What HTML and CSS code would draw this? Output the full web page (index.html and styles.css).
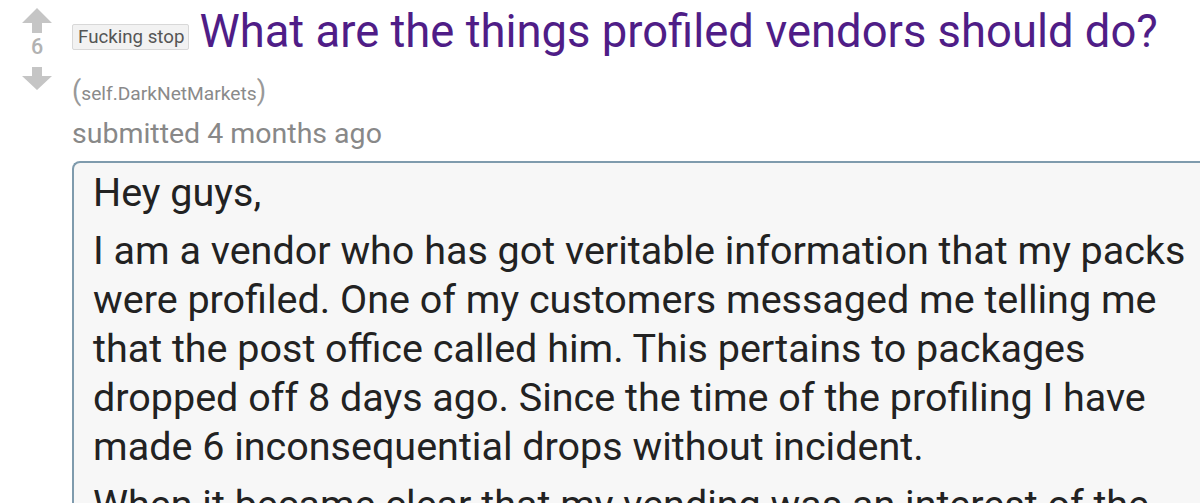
FILE: index.html
```html
<!DOCTYPE html>
<html>
<head>
<meta charset="utf-8">
<link rel="stylesheet" href="styles.css">
</head>
<body>
<div class="post">
  <div class="vote">
    <svg class="arrow up" width="30" height="25" viewBox="0 0 30 25"><path d="M15 0 L30 15 L20 15 L20 25 L10 25 L10 15 L0 15 Z" fill="#c5c5c5"/></svg>
    <div class="score">6</div>
    <svg class="arrow down" width="30" height="23" viewBox="0 0 30 23"><path d="M15 23 L30 9 L20 9 L20 0 L10 0 L10 9 L0 9 Z" fill="#c5c5c5"/></svg>
  </div>
  <div class="main">
    <div class="titlerow">
      <span class="flair">Fucking stop</span>
      <span class="title">What are the things profiled vendors should do?</span>
    </div>
    <div class="domain"><span class="paren">(</span>self.DarkNetMarkets<span class="paren">)</span></div>
    <div class="tagline">submitted 4 months ago</div>
    <div class="body">
      <p>Hey guys,</p>
      <p>I am a vendor who has got veritable information that my packs<br>were profiled. One of my customers messaged me telling me<br>that the post office called him. This pertains to packages<br>dropped off 8 days ago. Since the time of the profiling I have<br>made 6 inconsequential drops without incident.</p>
      <p>When it became clear that my vending was an interest of the<br>authorities I decided to stop and think about it.</p>
    </div>
  </div>
</div>
</body>
</html>
```
FILE: styles.css
```css
html, body { margin: 0; padding: 0; background: #fff; overflow: hidden; }
body { font-family: Roboto, "Liberation Sans", sans-serif; width: 1200px; height: 503px; }
.post { display: flex; }
.vote { width: 72px; flex: none; display: flex; flex-direction: column; align-items: flex-start; padding: 8px 0 0 22px; box-sizing: border-box; }
.arrow { display: block; }
.score { color: #b2b2b2; font-size: 21.5px; font-weight: 500; width: 30px; text-align: center; line-height: 20px; margin: 4px 0 10px; }
.main { flex: 1; min-width: 0; padding-top: 6px; }
.titlerow { display: flex; align-items: baseline; white-space: nowrap; }
.flair { font-size: 18.7px; color: #555; background: #f2f2f2; border: 1px solid #d8d8d8; border-radius: 2px; padding: 2px 4px 2px 5px; margin-right: 10px; line-height: 20px; position: relative; top: -4px; }
.title { font-size: 45.4px; color: #4f1d87; line-height: 52px; }
.domain { font-size: 19.2px; color: #8a8a8a; margin-top: 18px; line-height: 30px; }
.paren { font-size: 27px; line-height: 30px; color: #999; }
.tagline { font-size: 28.5px; color: #888; line-height: 34px; margin-top: 8px; }
.body { margin-top: 10px; background: #f7f7f7; border: 2px solid #7f9bad; border-right: none; border-bottom: none; border-top-left-radius: 8px; padding: 5px 0 0 19px; color: #222; font-size: 39.5px; line-height: 49px; white-space: nowrap; }
.body p { margin: 0 0 9px; }
```
